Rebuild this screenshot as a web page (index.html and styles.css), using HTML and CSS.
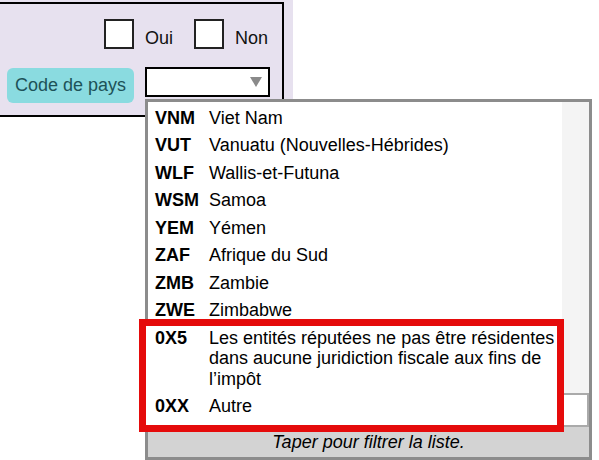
FILE: index.html
```html
<!DOCTYPE html>
<html lang="fr">

<head>
    <meta charset="UTF-8">
    <meta name="viewport" content="width=device-width, initial-scale=1.0">
    <title>Code de pays</title>
    <link rel="stylesheet" href="styles.css">
</head>

<body>

    <div class="panel">
        <div class="form-box">
            <div class="choices">
                <label class="choice"><span class="box"></span>Oui</label>
                <label class="choice"><span class="box"></span>Non</label>
            </div>
            <div class="country">
                <span class="tag">Code de pays</span>
                <div class="select">
                    <svg class="arrow" width="12" height="10" viewBox="0 0 12 10"><polygon points="0,0 12,0 6,10" fill="#8a8a8a"/></svg>
                </div>
            </div>
        </div>
    </div>

    <!-- liste déroulante ouverte -->
    <div class="dropdown">
        <div class="list-wrap">
            <ul class="list">
                <li><b>VNM</b><span>Viet Nam</span></li>
                <li><b>VUT</b><span>Vanuatu (Nouvelles-Hébrides)</span></li>
                <li><b>WLF</b><span>Wallis-et-Futuna</span></li>
                <li><b>WSM</b><span>Samoa</span></li>
                <li><b>YEM</b><span>Yémen</span></li>
                <li><b>ZAF</b><span>Afrique du Sud</span></li>
                <li><b>ZMB</b><span>Zambie</span></li>
                <li><b>ZWE</b><span>Zimbabwe</span></li>
            </ul>
            <div class="scrollbar"></div>
        </div>
        <input class="filter" type="text">
        <div class="hint">Taper pour filtrer la liste.</div>
    </div>

    <!-- encadré rouge -->
    <div class="highlight">
        <ul class="list">
            <li><b>0X5</b><span>Les entités réputées ne pas être résidentes dans aucune juridiction fiscale aux fins de l’impôt</span></li>
            <li><b>0XX</b><span>Autre</span></li>
        </ul>
    </div>

</body>

</html>
```

FILE: styles.css
```css
body {
    margin: 0;
    padding: 0;
    background-color: #ffffff;
    color: #111111;
    font-family: 'Liberation Sans', Arial, sans-serif;
    font-size: 18px;
}

.panel {
    width: 293px;
    padding: 2px 9px 0 0;
    box-sizing: border-box;
    background-color: #e7e1ef;
}

.form-box {
    height: 115px;
    box-sizing: border-box;
    border: 2px solid #000000;
    border-left: none;
    padding: 15px 14px 0 7px;
    display: flex;
    flex-direction: column;
    gap: 18px;
}

.choices {
    display: flex;
    justify-content: flex-end;
    gap: 21px;
}

.choice {
    display: flex;
    align-items: flex-end;
    gap: 11px;
    height: 30px;
    line-height: 21px;
}

.box {
    width: 30px;
    height: 30px;
    box-sizing: border-box;
    border: 2px solid #222222;
    background-color: #ffffff;
}

.country {
    display: flex;
    align-items: flex-start;
    gap: 11px;
}

.tag {
    flex-shrink: 0;
    white-space: nowrap;
    margin-top: 1px;
    height: 35px;
    line-height: 35px;
    padding: 0 8px;
    border-radius: 6px;
    background-color: #8adbe0;
    color: #1d5258;
}

.select {
    flex-shrink: 0;
    width: 125px;
    height: 30px;
    box-sizing: border-box;
    border: 2px solid #000000;
    background-color: #ffffff;
    display: flex;
    align-items: center;
    justify-content: flex-end;
    padding-right: 6px;
}

.dropdown {
    position: absolute;
    left: 145px;
    top: 99px;
    width: 447px;
    height: 361px;
    box-sizing: border-box;
    border: 3px solid #8c8c8c;
    background-color: #ffffff;
    display: flex;
    flex-direction: column;
}

.list-wrap {
    height: 291px;
    display: flex;
}

.list {
    flex: 1;
    margin: 0;
    padding: 2px 0 0 0;
    list-style: none;
    color: #000000;
}

.list li {
    display: grid;
    grid-template-columns: 54px 1fr;
    padding: 3.5px 0 3.5px 7px;
    line-height: 20.5px;
}

.scrollbar {
    width: 27px;
    background-color: #f4f4f4;
}

.filter {
    height: 34px;
    width: 100%;
    margin: 0;
    box-sizing: border-box;
    border: 2px solid #aaaaaa;
    background-color: #ffffff;
}

.hint {
    flex: 1;
    background-color: #d3d3d3;
    font-style: italic;
    text-align: center;
    line-height: 30px;
    color: #000000;
}

.highlight {
    position: absolute;
    left: 139px;
    top: 319px;
    width: 425px;
    height: 113px;
    box-sizing: border-box;
    border: 7px solid #e50b0b;
    background-color: #ffffff;
}

.highlight .list {
    padding: 0;
    margin-top: -2px;
}

.highlight .list li {
    padding-left: 9px;
}
```
